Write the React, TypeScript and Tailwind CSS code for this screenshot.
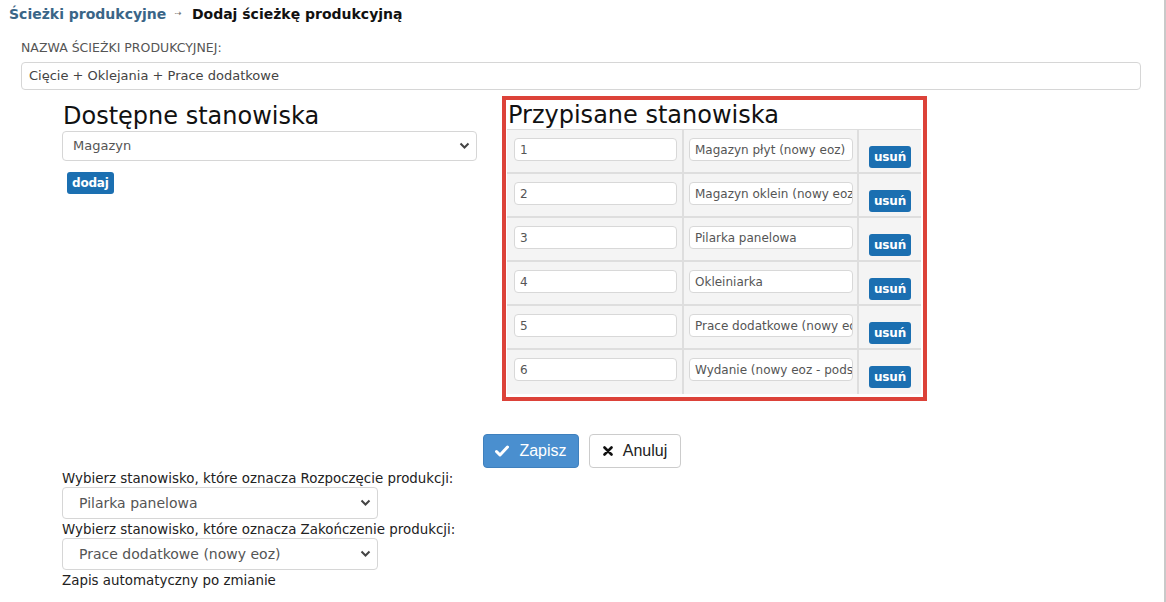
import React from 'react';

const rows = [
  { order: '1', name: 'Magazyn płyt (nowy eoz)' },
  { order: '2', name: 'Magazyn oklein (nowy eoz)' },
  { order: '3', name: 'Pilarka panelowa' },
  { order: '4', name: 'Okleiniarka' },
  { order: '5', name: 'Prace dodatkowe (nowy eoz)' },
  { order: '6', name: 'Wydanie (nowy eoz - podsumowanie)' },
];

const font = "font-['DejaVu_Sans',Verdana,sans-serif]";

function Chevron() {
  return (
    <svg width="11" height="8" viewBox="0 0 11 8" className="shrink-0">
      <path d="M1.5 1.5 L5.5 5.5 L9.5 1.5" fill="none" stroke="#444" strokeWidth="2" />
    </svg>
  );
}

function FakeSelect({ value, className, textClass }: { value: string; className: string; textClass: string }) {
  return (
    <div
      className={`flex items-center justify-between border border-[#d6d6d6] rounded-[4px] bg-white ${className}`}
    >
      <span className={`text-[#555] ${textClass}`}>{value}</span>
      <Chevron />
    </div>
  );
}

function SmallButton({ children }: { children: React.ReactNode }) {
  return (
    <button className="h-[22px] px-[5px] rounded-[3px] bg-[#1b6fb1] text-white text-[12px] font-bold leading-[22px] tracking-[-0.2px]">
      {children}
    </button>
  );
}

export default function App() {
  return (
    <div className={`w-[1166px] h-[602px] bg-white border-r-2 border-[#c9c9c9] overflow-hidden ${font} text-[#222]`}>
      {/* breadcrumb */}
      <div className="flex items-center pl-[9px] pt-[4px] h-[24px] text-[14px] font-bold">
        <span className="text-[#3a6587]">Ścieżki produkcyjne</span>
        <span className="ml-[8px] mr-[10px] text-[9px] font-normal text-[#777]">⇢</span>
        <span className="text-[#111]">Dodaj ścieżkę produkcyjną</span>
      </div>

      {/* name */}
      <div className="px-[21px] pt-[16px]">
        <div className="text-[12.5px] text-[#555] leading-[15px]">NAZWA ŚCIEŻKI PRODUKCYJNEJ:</div>
        <div className="mt-[7px] w-[1120px] h-[28px] border border-[#d6d6d6] rounded-[4px] flex items-center px-[7px] text-[13px] text-[#444]">
          Cięcie + Oklejania + Prace dodatkowe
        </div>
      </div>

      {/* columns */}
      <div className="flex pl-[62px] mt-[6px]">
        <div className="w-[415px] pt-[6px]">
          <h2 className="text-[24px] leading-[28px] text-[#111] pl-[1px]">Dostępne stanowiska</h2>
          <FakeSelect value="Magazyn" className="mt-[1px] h-[30px] pl-[10px] pr-[6px]" textClass="text-[13px]" />
          <div className="mt-[9px] pl-[5px]">
            <SmallButton>dodaj</SmallButton>
          </div>
        </div>

        <div className="ml-[25px] w-[425px] border-4 border-[#dc4239] pl-[1px] pr-[2px] pb-[3px]">
          <h2 className="text-[24px] leading-[28px] text-[#111] pl-[1px] pt-[1px]">Przypisane stanowiska</h2>
          <div className="bg-[#f4f4f4] border-t border-[#ddd]">
            {rows.map((r) => (
              <div key={r.order} className="flex h-[44px] border-b-2 border-[#dedede] last:border-b-0">
                <div className="w-[177px] border-r-2 border-[#dedede] pl-[7px] pt-[8px]">
                  <div className="w-[163px] h-[23px] bg-white border border-[#d8d8d8] rounded-[4px] flex items-center px-[5px] text-[12px] text-[#555]">
                    {r.order}
                  </div>
                </div>
                <div className="w-[175px] border-r-2 border-[#dedede] pl-[5px] pt-[8px]">
                  <div className="w-[164px] h-[23px] bg-white border border-[#d8d8d8] rounded-[4px] flex items-center px-[5px] text-[12px] text-[#555] overflow-hidden whitespace-nowrap">
                    {r.name}
                  </div>
                </div>
                <div className="flex-1 pl-[10px] pt-[14px]">
                  <SmallButton>usuń</SmallButton>
                </div>
              </div>
            ))}
          </div>
        </div>
      </div>

      {/* actions */}
      <div className="flex justify-center gap-[10px] mt-[33px] font-['Liberation_Sans',Arial,sans-serif]">
        <button className="w-[96px] h-[34px] rounded-[4px] bg-[#4a8fcf] border border-[#3f80bd] text-white text-[16px] flex items-center justify-center gap-[10px]">
          <svg width="14" height="12" viewBox="0 0 14 12">
            <path d="M1.5 6.5 L5 10 L12.5 2" fill="none" stroke="#fff" strokeWidth="3" strokeLinecap="round" strokeLinejoin="round" />
          </svg>
          Zapisz
        </button>
        <button className="w-[92px] h-[34px] rounded-[4px] bg-white border border-[#ccc] text-[#222] text-[16px] flex items-center justify-center gap-[10px]">
          <svg width="10" height="10" viewBox="0 0 10 10">
            <path d="M1.5 1.5 L8.5 8.5 M8.5 1.5 L1.5 8.5" fill="none" stroke="#111" strokeWidth="2.6" strokeLinecap="round" />
          </svg>
          Anuluj
        </button>
      </div>

      {/* start / end */}
      <div className="pl-[62px] mt-[2px] text-[13.4px] text-[#222]">
        <div className="leading-[17px]">Wybierz stanowisko, które oznacza Rozpoczęcie produkcji:</div>
        <FakeSelect value="Pilarka panelowa" className="w-[316px] h-[32px] pl-[16px] pr-[6px]" textClass="text-[14px]" />
        <div className="leading-[17px] mt-[2px]">Wybierz stanowisko, które oznacza Zakończenie produkcji:</div>
        <FakeSelect value="Prace dodatkowe (nowy eoz)" className="w-[316px] h-[32px] pl-[16px] pr-[6px]" textClass="text-[14px]" />
        <div className="leading-[17px] mt-[2px]">Zapis automatyczny po zmianie</div>
      </div>
    </div>
  );
}
